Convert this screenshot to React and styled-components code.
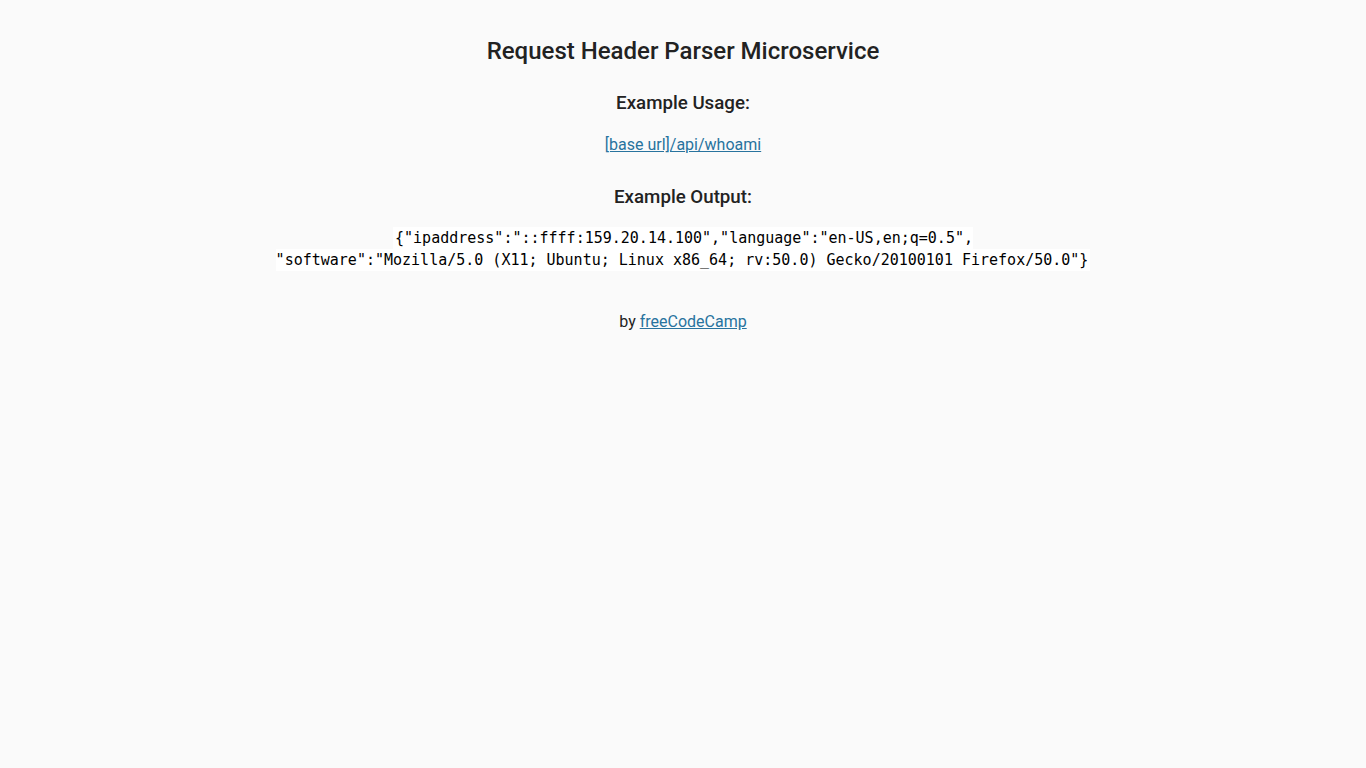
import React from 'react';
import styled, { createGlobalStyle } from 'styled-components';

const GlobalStyle = createGlobalStyle`
  body {
    margin: 0;
    font-family: Roboto, "Liberation Sans", sans-serif;
    font-size: 16px;
    color: #222;
    background-color: #fafafa;
    text-align: center;
    line-height: 1.4em;
  }
`;

const Container = styled.div`
  padding: 0;
  margin-top: 35px;
`;

const Title = styled.h2`
  font-size: 24px;
  font-weight: 500;
  margin: 0;
  line-height: 1.4em;
`;

const SubTitle = styled.h3`
  font-size: 18.72px;
  font-weight: 500;
  margin: ${props => (props.first ? '21px' : '28px')} 0 18px;
  line-height: 1.4em;
`;

const Para = styled.p`
  margin: 0;
`;

const CodePara = styled.p`
  margin: -1px 0 0;
  line-height: 22px;
`;

const Link = styled.a`
  color: #28739e;
`;

const Code = styled.code`
  font-family: "DejaVu Sans Mono", "Liberation Mono", monospace;
  font-size: 15px;
  padding: 2px;
  color: black;
  background-color: #fff;
`;

const Footer = styled.footer`
  margin-top: 40px;
`;

export default function App() {
  return (
    <>
      <GlobalStyle />
      <Container>
        <Title>Request Header Parser Microservice</Title>
        <SubTitle first>Example Usage:</SubTitle>
        <Para>
          <Link href="#">[base url]/api/whoami</Link>
        </Para>
        <SubTitle>Example Output:</SubTitle>
        <CodePara>
          <Code>
            {'{"ipaddress":"::ffff:159.20.14.100","language":"en-US,en;q=0.5",'}
            <br />
            {'"software":"Mozilla/5.0 (X11; Ubuntu; Linux x86_64; rv:50.0) Gecko/20100101 Firefox/50.0"}'}
          </Code>
        </CodePara>
      </Container>
      <Footer>
        <Para>
          by <Link href="#">freeCodeCamp</Link>
        </Para>
      </Footer>
    </>
  );
}
